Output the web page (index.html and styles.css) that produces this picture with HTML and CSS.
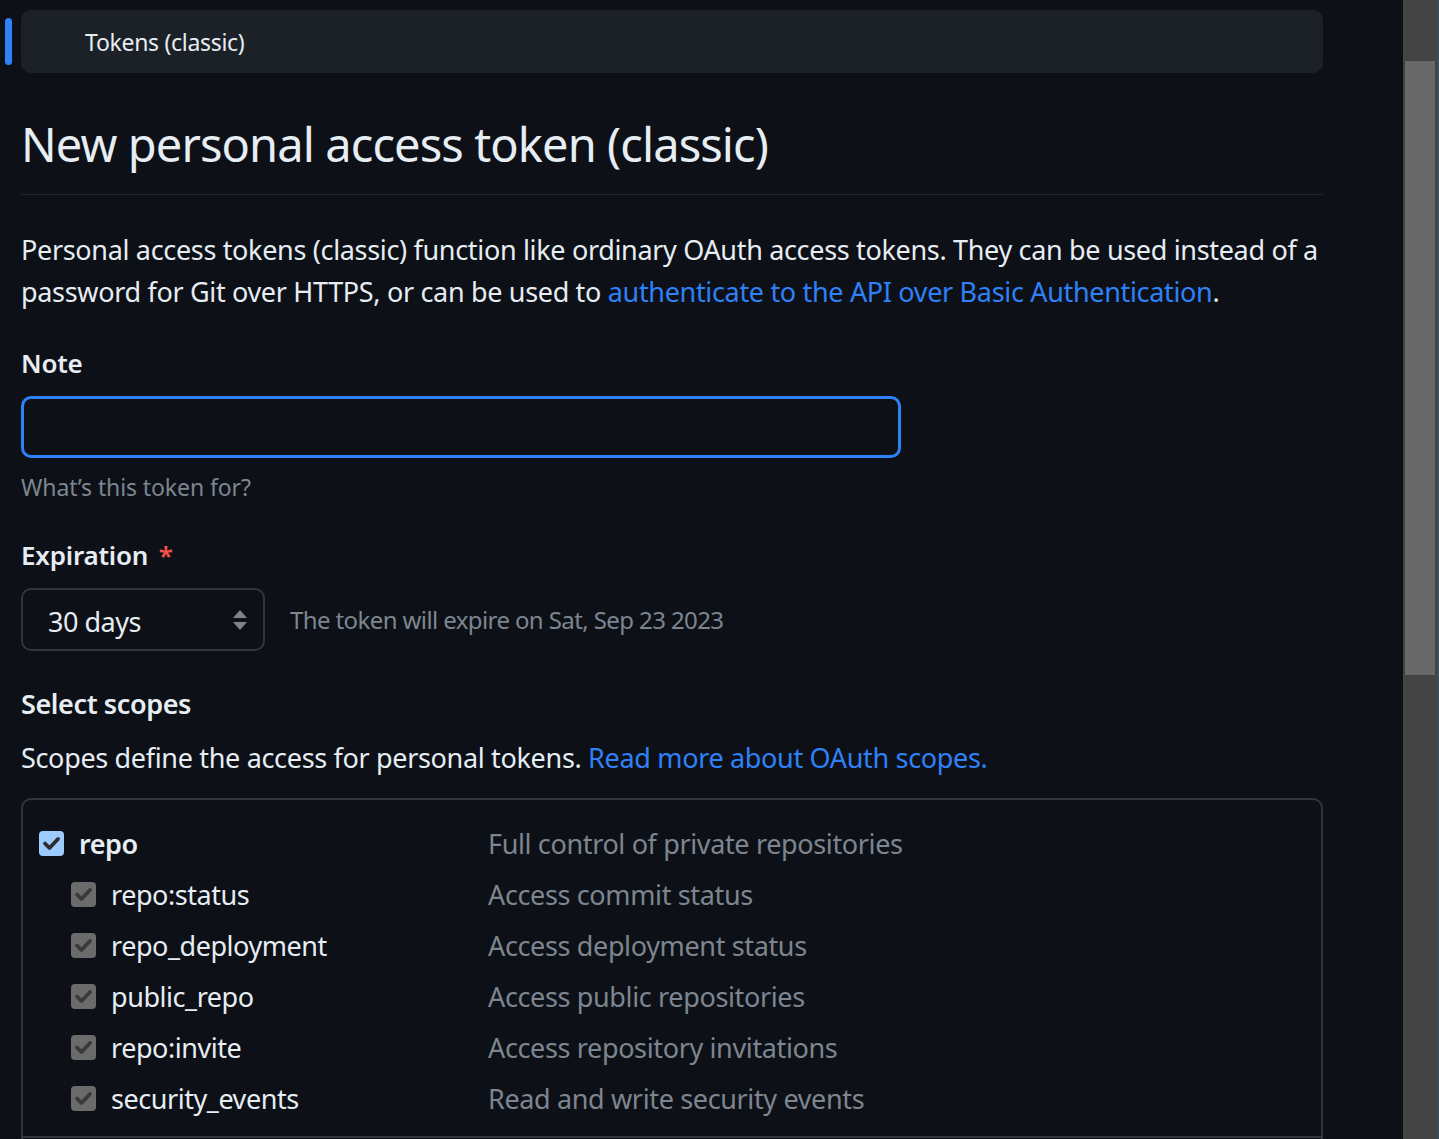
FILE: index.html
```html
<!DOCTYPE html>
<html lang="en">
<head>
<meta charset="utf-8">
<title>New personal access token (classic)</title>
<link rel="stylesheet" href="styles.css">
</head>
<body>
<div class="window">
  <main class="page">
    <nav class="subnav">
      <a class="subnav-item" href="#"><span class="indicator"></span>Tokens (classic)</a>
    </nav>

    <div class="subhead">
      <h1 class="subhead-heading">New personal access token (classic)</h1>
    </div>

    <p class="lead">Personal access tokens (classic) function like ordinary OAuth access tokens. They can be used instead of a password for Git over HTTPS, or can be used to <a href="#">authenticate to the API over Basic Authentication</a>.</p>

    <div class="field">
      <label class="label">Note</label>
      <div class="input focused"></div>
      <p class="hint">What’s this token for?</p>
    </div>

    <div class="field field-exp">
      <label class="label">Expiration <span class="req">*</span></label>
      <div class="exp-row">
        <div class="select">
          <span>30 days</span>
          <svg class="arrows" width="16" height="22" viewBox="0 0 16 22"><path d="M8 1 L15 9 L1 9 Z" fill="#7d8590"/><path d="M1 13 L15 13 L8 21 Z" fill="#7d8590"/></svg>
        </div>
        <span class="exp-note">The token will expire on Sat, Sep 23 2023</span>
      </div>
    </div>

    <h3 class="scopes-title">Select scopes</h3>
    <p class="scopes-desc">Scopes define the access for personal tokens. <a href="#">Read more about OAuth scopes.</a></p>

    <div class="scope-box">
      <div class="scope-group">
        <div class="scope-row main">
          <span class="scope-name"><span class="check on"><svg viewBox="0 0 25 25"><path d="M6 12.5 L10.5 17 L19 8" /></svg></span><strong>repo</strong></span>
          <span class="scope-desc">Full control of private repositories</span>
        </div>
        <div class="scope-row sub">
          <span class="scope-name"><span class="check off"><svg viewBox="0 0 25 25"><path d="M6 12.5 L10.5 17 L19 8" /></svg></span>repo:status</span>
          <span class="scope-desc">Access commit status</span>
        </div>
        <div class="scope-row sub">
          <span class="scope-name"><span class="check off"><svg viewBox="0 0 25 25"><path d="M6 12.5 L10.5 17 L19 8" /></svg></span>repo_deployment</span>
          <span class="scope-desc">Access deployment status</span>
        </div>
        <div class="scope-row sub">
          <span class="scope-name"><span class="check off"><svg viewBox="0 0 25 25"><path d="M6 12.5 L10.5 17 L19 8" /></svg></span>public_repo</span>
          <span class="scope-desc">Access public repositories</span>
        </div>
        <div class="scope-row sub">
          <span class="scope-name"><span class="check off"><svg viewBox="0 0 25 25"><path d="M6 12.5 L10.5 17 L19 8" /></svg></span>repo:invite</span>
          <span class="scope-desc">Access repository invitations</span>
        </div>
        <div class="scope-row sub">
          <span class="scope-name"><span class="check off"><svg viewBox="0 0 25 25"><path d="M6 12.5 L10.5 17 L19 8" /></svg></span>security_events</span>
          <span class="scope-desc">Read and write security events</span>
        </div>
      </div>
      <div class="scope-group">
        <div class="scope-row main">
          <span class="scope-name"><span class="check blank"></span><strong>workflow</strong></span>
          <span class="scope-desc">Update GitHub Action workflows</span>
        </div>
      </div>
    </div>
  </main>
  <div class="scrollbar"><div class="thumb"></div></div>
</div>
</body>
</html>
```
FILE: styles.css
```css
* { box-sizing: border-box; }
html, body { margin: 0; padding: 0; height: 100%; overflow: hidden; }
body {
  background: #0d1117;
  color: #e6edf3;
  font-family: "Noto Sans", "Open Sans", "Liberation Sans", sans-serif;
}
a { color: #2f81f7; text-decoration: none; }
.window { display: flex; height: 1139px; }
.page {
  width: 1403px;
  flex: none;
  padding: 10px 0 0 21px;
  overflow: hidden;
}
.page > * { width: 1302px; }

.subnav-item {
  position: relative;
  display: flex;
  align-items: center;
  height: 63px;
  padding-left: 64px;
  background: #1c2128;
  border-radius: 10px;
  color: #e6edf3;
  font-size: 23px;
  letter-spacing: -0.3px;
}
.indicator {
  position: absolute;
  left: -16px;
  top: 8px;
  width: 7px;
  height: 47px;
  border-radius: 4px;
  background: #2f81f7;
}

.subhead {
  margin-top: 41px;
  padding-bottom: 20px;
  border-bottom: 1px solid #21262d;
}
.subhead-heading {
  margin: 0;
  font-size: 47px;
  line-height: 60px;
  font-weight: 400;
  letter-spacing: -0.9px;
}

.lead {
  margin: 34px 0 0;
  font-size: 27px;
  line-height: 42px;
  letter-spacing: -0.33px;
}

.field { margin-top: 32px; }
.label {
  display: block;
  font-size: 26px;
  line-height: 36px;
  font-weight: 600;
  letter-spacing: -0.2px;
}
.input {
  margin-top: 15px;
  width: 880px;
  height: 62px;
  border-radius: 10px;
  background: #0d1117;
}
.input.focused { border: 3px solid #2f81f7; }
.hint {
  margin: 14px 0 0;
  color: #7d8590;
  font-size: 23px;
  line-height: 31px;
  letter-spacing: -0.1px;
}

.field-exp { margin-top: 34px; }
.req { color: #f85149; margin-left: 4px; }
.exp-row {
  margin-top: 15px;
  display: flex;
  align-items: center;
  gap: 25px;
}
.select {
  width: 244px;
  height: 63px;
  border: 2px solid #30363d;
  border-radius: 10px;
  display: flex;
  align-items: center;
  justify-content: space-between;
  padding: 0 15px 0 25px;
  font-size: 27px;
  letter-spacing: -0.5px;
}
.select span { position: relative; top: 2px; }
.arrows { display: block; }
.exp-note {
  color: #7d8590;
  font-size: 24px;
  letter-spacing: -0.6px;
}

.scopes-title {
  margin: 35px 0 0;
  font-size: 27px;
  line-height: 36px;
  font-weight: 600;
  letter-spacing: -0.4px;
}
.scopes-desc {
  margin: 15px 0 0;
  font-size: 27px;
  line-height: 42px;
  letter-spacing: -0.33px;
}

.scope-box {
  margin-top: 19px;
  border: 2px solid #30363d;
  border-radius: 10px;
}
.scope-group {
  padding: 18px 17px 12px 16px;
  border-bottom: 2px solid #30363d;
}
.scope-row {
  display: grid;
  grid-template-columns: 449px 1fr;
  align-items: center;
  height: 51px;
  font-size: 27px;
  letter-spacing: -0.36px;
}
.scope-row.sub { padding-left: 32px; grid-template-columns: 417px 1fr; }
.scope-name { display: flex; align-items: center; gap: 15px; letter-spacing: -0.45px; }
.scope-name strong { font-weight: 600; }
.scope-desc { color: #7d8590; }

.check {
  width: 25px;
  height: 25px;
  border-radius: 4px;
  flex: none;
  display: block;
}
.check svg { display: block; width: 25px; height: 25px; }
.check path { fill: none; stroke-width: 3.8; stroke-linecap: round; stroke-linejoin: round; }
.check.on { background: #9ecbff; }
.check.on path { stroke: #2e2e2e; }
.check.off { background: #6b6b6b; }
.check.off path { stroke: #3a3a3a; }
.check.blank { border: 2px solid #8b949e; }

.scrollbar {
  width: 36px;
  flex: none;
  background: #444444;
  padding: 61px 2px 0 2px;
  border-right: 2px solid #3d4c60;
}
.thumb {
  height: 614px;
  background: #686868;
}
```
